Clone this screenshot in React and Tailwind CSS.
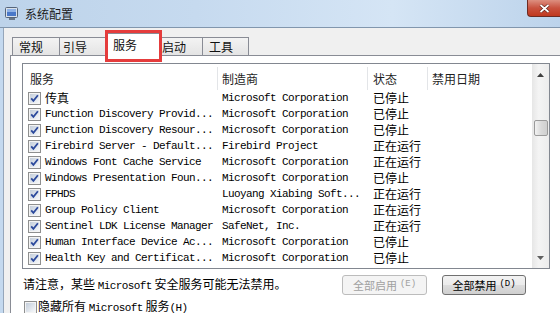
import React from "react";

const cjk = "font-['Noto_Sans_CJK_SC',sans-serif]";
const mono = "font-['Liberation_Mono','Noto_Sans_CJK_SC',monospace] text-[11px] tracking-[-0.6px]";

const rows = [
  ["传真", "Microsoft Corporation", "已停止", true],
  ["Function Discovery Provid...", "Microsoft Corporation", "已停止"],
  ["Function Discovery Resour...", "Microsoft Corporation", "已停止"],
  ["Firebird Server - Default...", "Firebird Project", "正在运行"],
  ["Windows Font Cache Service", "Microsoft Corporation", "正在运行"],
  ["Windows Presentation Foun...", "Microsoft Corporation", "已停止"],
  ["FPHDS", "Luoyang Xiabing Soft...", "正在运行"],
  ["Group Policy Client", "Microsoft Corporation", "正在运行"],
  ["Sentinel LDK License Manager", "SafeNet, Inc.", "正在运行"],
  ["Human Interface Device Ac...", "Microsoft Corporation", "已停止"],
  ["Health Key and Certificat...", "Microsoft Corporation", "已停止"],
];

function Check({ checked }) {
  return (
    <svg width="13" height="13" viewBox="0 0 13 13" className="shrink-0">
      <defs>
        <linearGradient id="cbg" x1="0" y1="0" x2="1" y2="1">
          <stop offset="0" stopColor="#c4cedb" />
          <stop offset="1" stopColor="#f6f8fa" />
        </linearGradient>
      </defs>
      <rect x="0.5" y="0.5" width="12" height="12" fill="#f4f4f4" stroke="#8e8f8f" />
      <rect x="2" y="2" width="9" height="9" fill="url(#cbg)" />
      {checked && (
        <path d="M3.2 6.4 5.4 8.9 9.9 3.3" fill="none" stroke="#2c4a9c" strokeWidth="1.8" />
      )}
    </svg>
  );
}

function Tab({ label, className }) {
  return (
    <div
      className={`h-[18px] -ml-[1px] flex items-center border border-b-0 border-[#898c95] bg-[linear-gradient(#f3f3f3,#e4e4e4)] text-[12px] text-[#111] ${cjk} ${className}`}
    >
      {label}
    </div>
  );
}

export default function App() {
  return (
    <div className="w-[560px] h-[313px] overflow-hidden flex flex-col bg-[#f0f0f0]">
      {/* title bar */}
      <div className="h-[28px] shrink-0 flex border-b border-[#8196ad] bg-[linear-gradient(90deg,#bdd3ea_0%,#c6daef_35%,#d5e5f5_70%,#bcd3eb_100%)]">
        <div className="flex items-center pl-[5px] pt-[1px]">
          <svg width="14" height="14" viewBox="0 0 14 14">
            <rect x="0.5" y="0.5" width="12" height="10" rx="1" fill="#d9e1ea" stroke="#56657a" />
            <rect x="2" y="2" width="9" height="7" fill="#4a78c8" />
            <rect x="2" y="2" width="9" height="3" fill="#8fb2e6" />
            <rect x="4" y="11" width="6" height="2" fill="#6b7888" />
          </svg>
          <span className={`ml-[6px] text-[12px] text-[#1c1c1c] ${cjk}`}>系统配置</span>
        </div>
        <div className="ml-auto w-[33px] h-[17px] rounded-bl-[4px] border border-t-0 border-r-0 border-[#6d2b22] bg-[linear-gradient(#dd8f80,#c9523f_50%,#c0391f)] flex items-center justify-center">
          <svg width="11" height="9" viewBox="0 0 11 9">
            <path d="M1.5 1 9.5 8M9.5 1 1.5 8" stroke="#5a1e16" strokeWidth="3" />
            <path d="M1.5 1 9.5 8M9.5 1 1.5 8" stroke="#ffffff" strokeWidth="1.7" />
          </svg>
        </div>
      </div>

      {/* body */}
      <div className="flex flex-1 min-h-0">
        <div className="w-[3px] bg-[#c4d9ef]" />
        <div className="w-[1px] bg-[#95a6ba]" />
        <div className="flex-1 flex flex-col pl-[6px] pt-[3px]">
          {/* tabs */}
          <div className="relative h-[24px] shrink-0 flex items-end pl-[3px]">
            <Tab label="常规" className="w-[48px] pl-[6px]" />
            <Tab label="引导" className="w-[47px] pl-[3px]" />
            <div
              className={`relative z-10 -ml-[1px] w-[55px] h-[23px] -mb-[1px] pl-[7px] flex items-center bg-white border border-b-0 border-[#898c95] text-[12px] text-[#111] ${cjk}`}
            >
              服务
            </div>
            <Tab label="启动" className="w-[44px] pl-[2px]" />
            <Tab label="工具" className="w-[47px] pl-[6px]" />
            <div className="absolute z-20 left-[95px] -top-[1px] w-[57px] h-[32px] border-[3px] border-[#e53c3c]" />
          </div>

          {/* panel */}
          <div className="flex-1 border-l border-t border-[#898c95] bg-white pl-[11px] pt-[7px]">
            <div className="w-[528px] h-[206px] border border-[#828790] flex bg-white">
              <div className="flex-1 flex flex-col">
                <div className={`h-[26px] pt-[3px] flex text-[12px] text-[#1e1e1e] ${cjk}`}>
                  <div className="w-[195px] pl-[7px] flex items-center border-r border-[#e3e5e8]">服务</div>
                  <div className="w-[150px] pl-[4px] flex items-center border-r border-[#e3e5e8]">制造商</div>
                  <div className="w-[60px] pl-[5px] flex items-center border-r border-[#e3e5e8]">状态</div>
                  <div className="flex-1 pl-[4px] flex items-center">禁用日期</div>
                </div>
                {rows.map(([name, maker, status, isCjk]) => (
                  <div key={name} className="h-[16px] flex items-center text-black">
                    <div className="w-[195px] pl-[5px] flex items-center">
                      <Check checked />
                      <span
                        className={`ml-[4px] whitespace-pre ${isCjk ? `text-[12px] ${cjk}` : mono}`}
                      >
                        {name}
                      </span>
                    </div>
                    <div className={`w-[150px] pl-[4px] whitespace-pre ${mono}`}>{maker}</div>
                    <div className={`w-[60px] pl-[5px] text-[12px] leading-[16px] ${cjk}`}>{status}</div>
                  </div>
                ))}
              </div>
              {/* scrollbar */}
              <div className="w-[17px] flex flex-col items-center bg-[linear-gradient(90deg,#e6e6e6,#f4f4f4_40%,#ececec)]">
                <div className="h-[17px] flex items-center justify-center pt-[5px]">
                  <svg width="7" height="4" viewBox="0 0 7 4">
                    <path d="M0 4 3.5 0 7 4Z" fill="#404040" />
                  </svg>
                </div>
                <div className="mt-[39px] w-[14px] h-[16px] rounded-[2px] border border-[#9a9a9a] bg-[linear-gradient(90deg,#f2f2f2,#dadada_50%,#cfcfcf)]" />
                <div className="mt-auto h-[17px] flex items-center justify-center pb-[4px]">
                  <svg width="7" height="4" viewBox="0 0 7 4">
                    <path d="M0 0 3.5 4 7 0Z" fill="#606060" />
                  </svg>
                </div>
              </div>
            </div>

            {/* note + buttons */}
            <div className="w-[528px] mt-[6px] h-[20px] flex items-center pr-[24px]">
              <div className={`flex-1 pl-[1px] text-[12px] text-black whitespace-pre ${cjk}`}>
                请注意，某些 <span className={mono}>Microsoft</span> 安全服务可能无法禁用。
              </div>
              <div
                className={`w-[85px] h-[20px] rounded-[3px] border border-[#bcbcbc] bg-[#f4f4f4] flex items-center justify-center text-[11px] text-[#a0a0a0] ${cjk}`}
              >
                全部启用 <span className="ml-[3px] text-[9px] font-['Liberation_Mono',monospace]">(E)</span>
              </div>
              <div
                className={`ml-[15px] w-[84px] h-[20px] rounded-[3px] border border-[#707070] bg-[linear-gradient(#f2f2f2,#ebebeb_50%,#dddddd_51%,#cfcfcf)] flex items-center justify-center text-[11px] text-black ${cjk}`}
              >
                全部禁用 <span className="ml-[3px] text-[9px] font-['Liberation_Mono',monospace]">(D)</span>
              </div>
            </div>

            <div className={`mt-[5px] h-[14px] pl-[2px] flex items-center text-[12px] text-black ${cjk}`}>
              <Check />
              <span className="ml-[1px] whitespace-pre">
                隐藏所有 <span className={mono}>Microsoft</span> 服务<span className={mono}>(H)</span>
              </span>
            </div>
          </div>
        </div>
      </div>
    </div>
  );
}
